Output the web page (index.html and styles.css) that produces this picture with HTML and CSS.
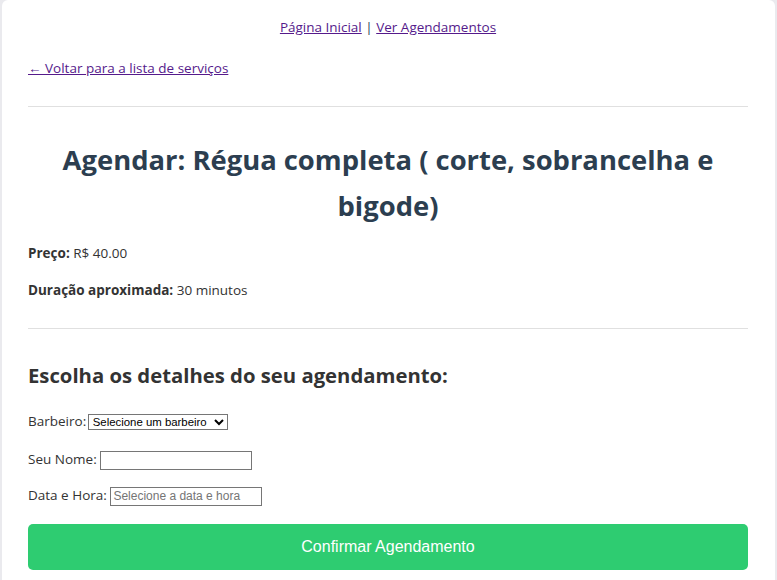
FILE: index.html
```html
<!DOCTYPE html>
<html lang="pt-BR">
<head>
<meta charset="utf-8">
<title>Agendar</title>
<link rel="stylesheet" href="styles.css">
</head>
<body>
<div class="container">
  <nav class="topnav"><a href="#" class="link">Página Inicial</a> | <a href="#" class="link">Ver Agendamentos</a></nav>
  <p class="back"><a href="#" class="link">← Voltar para a lista de serviços</a></p>
  <hr class="rule rule-top">
  <h1 class="title">Agendar: Régua completa ( corte, sobrancelha e bigode)</h1>
  <p class="info"><strong>Preço:</strong> R$ 40.00</p>
  <p class="info info-2"><strong>Duração aproximada:</strong> 30 minutos</p>
  <hr class="rule rule-mid">
  <h2 class="subtitle">Escolha os detalhes do seu agendamento:</h2>
  <form class="form">
    <div class="row"><label>Barbeiro:</label> <select class="ctl sel"><option>Selecione um barbeiro</option></select></div>
    <div class="row"><label>Seu Nome:</label> <input class="ctl txt" type="text"></div>
    <div class="row row-last"><label>Data e Hora:</label> <input class="ctl txt" type="text" placeholder="Selecione a data e hora"></div>
    <button type="button" class="btn">Confirmar Agendamento</button>
  </form>
</div>
</body>
</html>
```
FILE: styles.css
```css
html, body { margin: 0; padding: 0; }
body {
  background: #eaeaee;
  font-family: "Open Sans", "Noto Sans", sans-serif;
  font-size: 13.5px;
  line-height: 22px;
  color: #333;
}
.container {
  margin: 0 2px;
  background: #fff;
  border-radius: 6px 6px 0 0;
  padding: 16px 27px 20px 26px;
  min-height: 560px;
}
.link { color: #551a8b; text-decoration: underline; }
.topnav { text-align: center; color: #2c3e50; margin: 0; }
.back { margin: 19px 0 0; }
.rule { border: 0; border-top: 1px solid #e0e0e0; margin: 0; height: 0; }
.rule-top { margin-top: 27px; }
.title {
  margin: 30px 0 0;
  text-align: center;
  font-size: 27.4px;
  line-height: 46px;
  color: #2c3e50;
  font-weight: 700;
}
.info { margin: 13px 0 0; }
.info-2 { margin-top: 15px; }
.info strong { font-weight: 700; }
.rule-mid { margin-top: 27px; }
.subtitle {
  margin: 29px 0 0;
  font-size: 20.3px;
  line-height: 35px;
  color: #333;
  font-weight: 700;
}
.form { margin-top: 17px; display: flex; flex-direction: column; gap: 16px; }
.row { height: 22px; line-height: 22px; }
.row-last { margin-top: -2px; margin-bottom: 2px; }
.ctl {
  font-family: "Liberation Sans", Arial, sans-serif;
  font-size: 12px;
  box-sizing: border-box;
  vertical-align: middle;
}
.sel { height: 16px; width: 140px; font-size: 11.4px; padding: 0; margin-left: -2px; border: 1px solid #767676; border-radius: 0; background: #fff; color: #000; }
.txt { height: 19px; width: 152px; padding: 1px 2px; border: 1px solid #767676; }
.btn {
  display: block;
  width: 100%;
  height: 46px;
  border: 0;
  border-radius: 5px;
  background: #2ecc71;
  color: #fff;
  font-family: "Liberation Sans", Arial, sans-serif;
  font-size: 16px;
}
```
